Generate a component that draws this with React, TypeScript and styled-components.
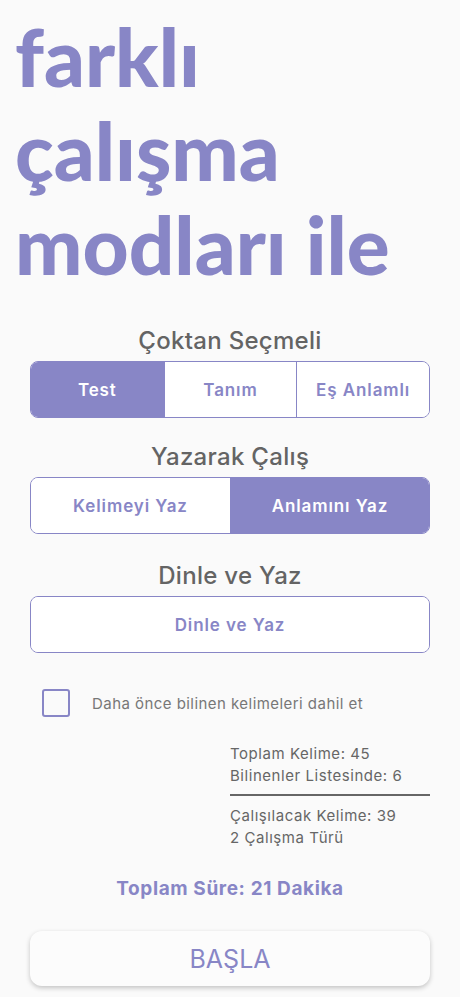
import React, { useState } from 'react'
import styled, { createGlobalStyle } from 'styled-components'

const purple = '#8886c6'

const GlobalStyle = createGlobalStyle`
  body {
    margin: 0;
    background: #fafafa;
    font-family: Inter, 'Noto Sans', sans-serif;
  }
`

const Page = styled.div`
  width: 460px;
  min-height: 997px;
  box-sizing: border-box;
  padding: 0 30px;
  display: flex;
  flex-direction: column;
`

const Headline = styled.h1`
  margin: 9px 0 0 -15px;
  font-family: Lato, sans-serif;
  font-weight: 900;
  font-size: 80px;
  line-height: 94px;
  letter-spacing: 0;
  color: ${purple};
`

const SectionTitle = styled.h2<{ $top: number }>`
  margin: ${(p) => p.$top}px 0 6px;
  text-align: center;
  font-size: 24px;
  line-height: 28px;
  font-weight: 500;
  letter-spacing: 0.3px;
  color: #646464;
`

const Segmented = styled.div<{ $cols: number }>`
  display: grid;
  grid-template-columns: repeat(${(p) => p.$cols}, 1fr);
  height: 55px;
  border: 1.5px solid ${purple};
  border-radius: 8px;
  overflow: hidden;
  background: #fff;
`

const Segment = styled.button<{ $active: boolean }>`
  border: none;
  border-left: 1.5px solid ${purple};
  &:first-child {
    border-left: none;
  }
  background: ${(p) => (p.$active ? purple : '#fff')};
  color: ${(p) => (p.$active ? '#fff' : purple)};
  font-family: Inter, sans-serif;
  font-size: 17px;
  font-weight: 600;
  letter-spacing: 0.9px;
  cursor: pointer;
`

const CheckRow = styled.label`
  display: flex;
  align-items: center;
  gap: 22px;
  margin: 36px 0 0 12px;
  color: #777;
  font-size: 15px;
  letter-spacing: 0.45px;
`

const Box = styled.span<{ $on: boolean }>`
  width: 24px;
  height: 24px;
  border: 2.5px solid ${purple};
  border-radius: 3px;
  background: ${(p) => (p.$on ? purple : 'transparent')};
`

const Stats = styled.div`
  margin: 26px 0 0 200px;
  color: #666;
  font-size: 15px;
  line-height: 22px;
  letter-spacing: 0.55px;
`

const Divider = styled.hr`
  border: none;
  border-top: 2px solid #666;
  margin: 7px 0 9px;
`

const Total = styled.div`
  margin-top: 28px;
  text-align: center;
  color: ${purple};
  font-size: 19px;
  font-weight: 700;
  letter-spacing: 0.6px;
`

const StartButton = styled.button`
  margin-top: 31px;
  height: 55px;
  border: none;
  border-radius: 12px;
  background: #fcfcfc;
  box-shadow: 0 2px 5px rgba(0, 0, 0, 0.22);
  color: ${purple};
  font-family: Inter, sans-serif;
  font-size: 25px;
  font-weight: 400;
  cursor: pointer;
`

export default function App() {
  const [choice, setChoice] = useState(0)
  const [write, setWrite] = useState(1)
  const [known, setKnown] = useState(false)

  return (
    <>
      <GlobalStyle />
      <Page>
        <Headline>
          farklı
          <br />
          çalışma
          <br />
          modları ile
        </Headline>

        <SectionTitle $top={36}>Çoktan Seçmeli</SectionTitle>
        <Segmented $cols={3}>
          {['Test', 'Tanım', 'Eş Anlamlı'].map((t, i) => (
            <Segment key={t} $active={choice === i} onClick={() => setChoice(i)}>
              {t}
            </Segment>
          ))}
        </Segmented>

        <SectionTitle $top={25}>Yazarak Çalış</SectionTitle>
        <Segmented $cols={2}>
          {['Kelimeyi Yaz', 'Anlamını Yaz'].map((t, i) => (
            <Segment key={t} $active={write === i} onClick={() => setWrite(i)}>
              {t}
            </Segment>
          ))}
        </Segmented>

        <SectionTitle $top={28}>Dinle ve Yaz</SectionTitle>
        <Segmented $cols={1}>
          <Segment $active={false}>Dinle ve Yaz</Segment>
        </Segmented>

        <CheckRow onClick={() => setKnown(!known)}>
          <Box $on={known} />
          Daha önce bilinen kelimeleri dahil et
        </CheckRow>

        <Stats>
          <div>Toplam Kelime: 45</div>
          <div>Bilinenler Listesinde: 6</div>
          <Divider />
          <div>Çalışılacak Kelime: 39</div>
          <div>2 Çalışma Türü</div>
        </Stats>

        <Total>Toplam Süre: 21 Dakika</Total>

        <StartButton>BAŞLA</StartButton>
      </Page>
    </>
  )
}
